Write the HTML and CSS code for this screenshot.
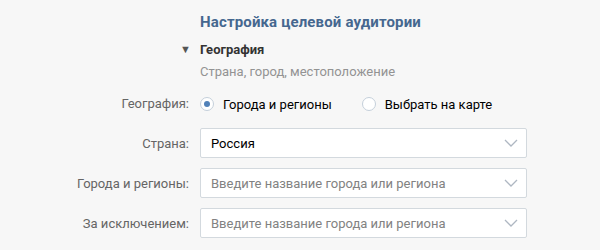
FILE: index.html
```html
<!DOCTYPE html>
<html lang="ru">
<head>
    <meta charset="UTF-8">
    <title>Настройка целевой аудитории</title>
    <link rel="stylesheet" href="styles.css">
</head>
<body>
    <div class="settings">
        <h1 class="settings-title">Настройка целевой аудитории</h1>
        <div class="section-head">
            <span class="toggle">&#9660;</span>
            <div>
                <h2 class="section-title">География</h2>
                <div class="section-desc">Страна, город, местоположение</div>
            </div>
        </div>
        <div class="form-row radio-row">
            <label class="row-label">География:</label>
            <div class="radios">
                <label class="radio"><span class="radio-dot checked"></span>Города и регионы</label>
                <label class="radio"><span class="radio-dot"></span>Выбрать на карте</label>
            </div>
        </div>
        <div class="form-row">
            <label class="row-label">Страна:</label>
            <div class="select">
                <span class="select-value">Россия</span>
                <svg class="chevron" width="14" height="8" viewBox="0 0 14 8"><path d="M1 1l6 6 6-6" fill="none" stroke="#aeb7c2" stroke-width="1.3"/></svg>
            </div>
        </div>
        <div class="form-row">
            <label class="row-label">Города и регионы:</label>
            <div class="select">
                <span class="select-placeholder">Введите название города или региона</span>
                <svg class="chevron" width="14" height="8" viewBox="0 0 14 8"><path d="M1 1l6 6 6-6" fill="none" stroke="#aeb7c2" stroke-width="1.3"/></svg>
            </div>
        </div>
        <div class="form-row">
            <label class="row-label">За исключением:</label>
            <div class="select">
                <span class="select-placeholder">Введите название города или региона</span>
                <svg class="chevron" width="14" height="8" viewBox="0 0 14 8"><path d="M1 1l6 6 6-6" fill="none" stroke="#aeb7c2" stroke-width="1.3"/></svg>
            </div>
        </div>
    </div>
</body>
</html>
```

FILE: styles.css
```css
body {
    margin: 0;
    background-color: #f7f7f7;
    font-family: Roboto, 'Liberation Sans', sans-serif;
    font-size: 13px;
    color: #000;
}
.settings {
    padding-top: 12px;
}
.settings-title {
    margin: 0 0 0 200px;
    font-size: 15px;
    font-weight: 700;
    line-height: 20px;
    letter-spacing: 0.15px;
    color: #45678f;
}
.section-head {
    display: flex;
    margin-top: 8px;
    padding-left: 180px;
}
.toggle {
    width: 20px;
    font-size: 11px;
    line-height: 20px;
    color: #555;
}
.section-title {
    margin: 0;
    font-size: 13px;
    font-weight: 700;
    line-height: 20px;
    color: #333;
}
.section-desc {
    margin-top: 2px;
    line-height: 20px;
    color: #939393;
}
.form-row {
    display: grid;
    grid-template-columns: 189px 327px;
    column-gap: 11px;
    align-items: center;
    margin-top: 10px;
}
.radio-row {
    margin-top: 11px;
}
.radio-row + .form-row {
    margin-top: 14px;
}
.row-label {
    text-align: right;
    color: #656565;
}
.radios {
    display: flex;
    height: 20px;
    align-items: center;
    margin-top: 1px;
}
.radio {
    display: flex;
    align-items: center;
    margin-right: 30px;
    color: #000;
}
.radio-dot {
    box-sizing: border-box;
    width: 14px;
    height: 14px;
    margin-right: 9px;
    border: 1px solid #c5d0db;
    border-radius: 50%;
    background-color: #fff;
    position: relative;
}
.radio-dot.checked::after {
    content: "";
    position: absolute;
    left: 3px;
    top: 3px;
    width: 6px;
    height: 6px;
    border-radius: 50%;
    background-color: #5181b8;
}
.select {
    box-sizing: border-box;
    display: flex;
    align-items: center;
    justify-content: space-between;
    height: 30px;
    padding: 0 8px 0 10px;
    border: 1px solid #d3d9de;
    border-radius: 2px;
    background-color: #fff;
}
.select-placeholder {
    color: #828282;
}
```
